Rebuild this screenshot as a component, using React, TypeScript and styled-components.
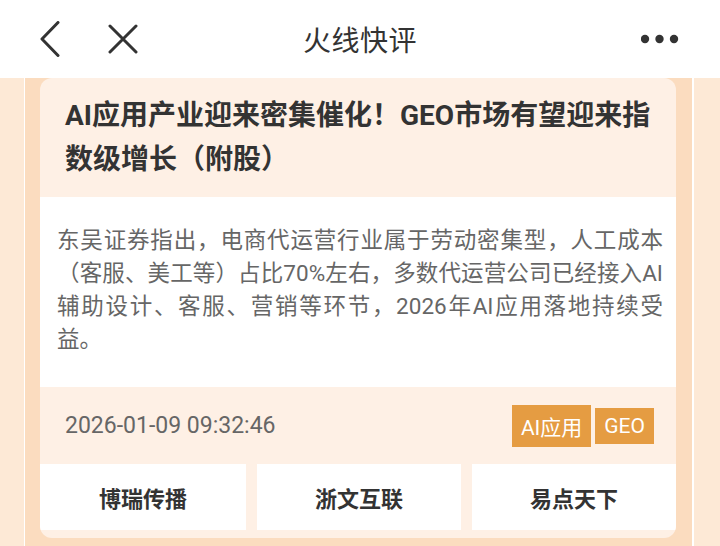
import React from 'react'
import styled, { createGlobalStyle } from 'styled-components'

const GlobalStyle = createGlobalStyle`
  html, body {
    margin: 0;
    padding: 0;
    background: #fde9d6;
  }
  body {
    font-family: Roboto, "Noto Sans CJK SC", sans-serif;
    -webkit-font-smoothing: antialiased;
  }
`

const Page = styled.div`
  width: 720px;
  height: 546px;
  overflow: hidden;
  display: flex;
  flex-direction: column;
  background: #fde9d6;
`

const NavBar = styled.header`
  flex: 0 0 78px;
  background: #ffffff;
  display: grid;
  grid-template-columns: 1fr auto 1fr;
  align-items: center;
`

const NavLeft = styled.div`
  display: flex;
  align-items: center;
  gap: 48px;
  padding-left: 40px;
`

const NavRight = styled.div`
  display: flex;
  justify-content: flex-end;
  padding-right: 41px;
`

const NavTitle = styled.h1`
  margin: 0;
  font-size: 28px;
  font-weight: 400;
  color: #333333;
  letter-spacing: 0.5px;
`

const IconButton = styled.span`
  display: flex;
  align-items: center;
  justify-content: center;
`

const Column = styled.main`
  flex: 1;
  margin: 0 26px 0 24px;
  border-left: 1px solid #ffffff;
  border-right: 2px solid #ffffff;
  background: #fbdcbf;
  padding: 0 16px 0 15px;
`

const Card = styled.article`
  background: #fef0e5;
  border-radius: 12px;
  overflow: hidden;
  padding-bottom: 8px;
`

const Headline = styled.h2`
  margin: 0;
  padding: 16px 25px 15px 25px;
  font-size: 28px;
  line-height: 44px;
  font-weight: 700;
  color: #333333;
`

const Summary = styled.p`
  margin: 0;
  background: #ffffff;
  padding: 27px 13px 31px 17px;
  font-size: 22.5px;
  line-height: 33px;
  text-align: justify;
  color: #666666;
`

const MetaRow = styled.div`
  height: 77px;
  display: flex;
  align-items: center;
  justify-content: space-between;
  padding: 0 22px 0 25px;
`

const Time = styled.span`
  font-size: 23px;
  color: #666666;
`

const Tags = styled.div`
  display: flex;
  align-items: center;
  gap: 4px;
`

const Tag = styled.span`
  background: #e59c42;
  color: #ffffff;
  font-size: 21px;
  line-height: normal;
  padding: 6px 9px;
`

const Stocks = styled.div`
  display: grid;
  grid-template-columns: 206px 204px 204px;
  gap: 11px;
`

const Stock = styled.div`
  height: 66px;
  background: #ffffff;
  display: flex;
  align-items: center;
  justify-content: center;
  font-size: 22px;
  font-weight: 700;
  color: #333333;
`

const BackIcon = () => (
  <svg width="20" height="36" viewBox="0 0 20 36" fill="none">
    <polyline points="18,1.5 2,18 18,34.5" stroke="#333" strokeWidth="3" strokeLinecap="round" strokeLinejoin="round" />
  </svg>
)

const CloseIcon = () => (
  <svg width="30" height="30" viewBox="0 0 30 30" fill="none">
    <path d="M2 2 L28 28 M28 2 L2 28" stroke="#333" strokeWidth="3" strokeLinecap="round" />
  </svg>
)

const MoreIcon = () => (
  <svg width="38" height="10" viewBox="0 0 38 10">
    <circle cx="4" cy="5" r="4.2" fill="#333" />
    <circle cx="18.5" cy="5" r="4.2" fill="#333" />
    <circle cx="33" cy="5" r="4.2" fill="#333" />
  </svg>
)

const stocks = ['博瑞传播', '浙文互联', '易点天下']

export default function App() {
  return (
    <Page>
      <GlobalStyle />
      <NavBar>
        <NavLeft>
          <IconButton><BackIcon /></IconButton>
          <IconButton><CloseIcon /></IconButton>
        </NavLeft>
        <NavTitle>火线快评</NavTitle>
        <NavRight>
          <IconButton><MoreIcon /></IconButton>
        </NavRight>
      </NavBar>
      <Column>
        <Card>
          <Headline>AI应用产业迎来密集催化！GEO市场有望迎来指数级增长（附股）</Headline>
          <Summary>
            东吴证券指出，电商代运营行业属于劳动密集型，人工成本（客服、美工等）占比70%左右，多数代运营公司已经接入AI辅助设计、客服、营销等环节，2026年AI应用落地持续受益。
          </Summary>
          <MetaRow>
            <Time>2026-01-09 09:32:46</Time>
            <Tags>
              <Tag>AI应用</Tag>
              <Tag>GEO</Tag>
            </Tags>
          </MetaRow>
          <Stocks>
            {stocks.map(s => (
              <Stock key={s}>{s}</Stock>
            ))}
          </Stocks>
        </Card>
      </Column>
    </Page>
  )
}
